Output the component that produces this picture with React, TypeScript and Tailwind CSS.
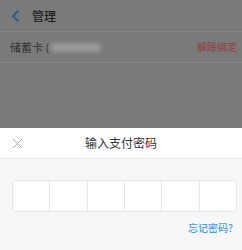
import React from "react";

const font = { fontFamily: '"Noto Sans CJK SC", "Noto Sans", sans-serif' };

export default function App() {
  return (
    <div className="relative flex h-[250px] w-[242px] flex-col overflow-hidden bg-[#f7f7f7]" style={font}>
      {/* page behind the dim layer */}
      <div className="flex h-[128px] flex-col bg-[#7a7a7a]">
        <div className="flex h-[32px] items-center border-b border-[#868686] pl-[11px]">
          <svg width="9" height="14" viewBox="0 0 9 14" fill="none">
            <path d="M7.5 1.5 2 7l5.5 5.5" stroke="#1f5f9a" strokeWidth="1.8" />
          </svg>
          <span className="ml-[12px] text-[12px] font-medium leading-none text-[#222]">管理</span>
        </div>
        <div className="flex h-[31px] items-center justify-between border-b border-[#858585] pl-[10px] pr-[5px]">
          <div className="flex items-center">
            <span className="text-[11px] leading-none text-[#333]">储蓄卡 (</span>
            <span className="ml-[2px] h-[9px] w-[50px] rounded-sm bg-[#9a9a9a] blur-[2px]" />
          </div>
          <span className="text-[10px] leading-none text-[#963c3c]">解除绑定</span>
        </div>
      </div>

      {/* payment password sheet */}
      <div className="flex flex-1 flex-col">
        <div className="relative flex h-[31px] items-center justify-center border-b border-[#ececec] bg-white">
          <svg className="absolute left-[12px] top-[10px]" width="11" height="11" viewBox="0 0 11 11">
            <path d="M1 1l9 9M10 1l-9 9" stroke="#a8a8a8" strokeWidth="1" />
          </svg>
          <span className="text-[12px] leading-none text-[#333]">输入支付密码</span>
        </div>
        <div className="flex flex-col pl-[12px] pr-[5px] pt-[21px]">
          <div className="flex h-[32px] overflow-hidden rounded-[4px] border border-[#e6e6e6] bg-white">
            {[0, 1, 2, 3, 4, 5].map((i) => (
              <div key={i} className={`flex-1 ${i > 0 ? "border-l border-[#e6e6e6]" : ""}`} />
            ))}
          </div>
          <div className="mt-[11px] flex justify-end pr-[4px]">
            <span className="text-[10px] font-medium leading-none text-[#4a9be8]">忘记密码?</span>
          </div>
        </div>
      </div>
    </div>
  );
}
